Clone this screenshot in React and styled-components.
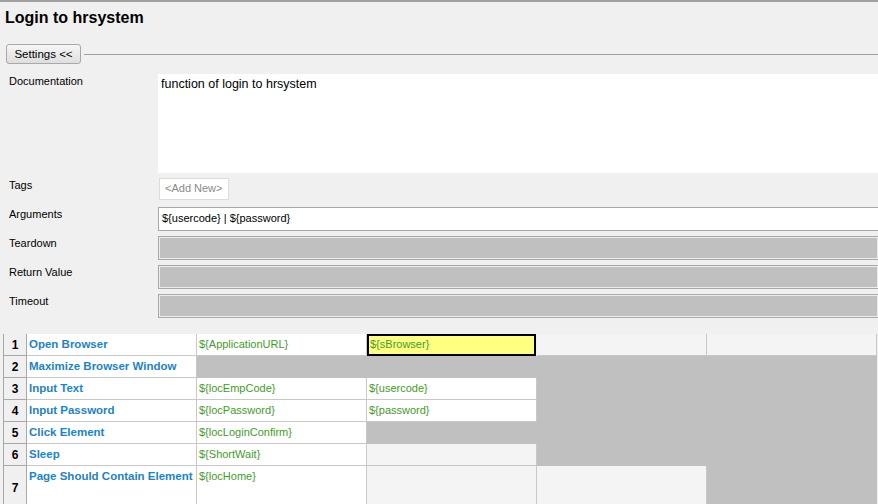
import styled, { createGlobalStyle } from 'styled-components';

const GlobalStyle = createGlobalStyle`
	html, body {
		margin: 0;
		padding: 0;
		background: #f0f0f0;
		overflow: hidden;
	}
	body {
		font-family: 'Liberation Sans', Arial, sans-serif;
		font-size: 11px;
		color: #000;
	}
`;

const fields = [
	{ label: 'Tags', kind: 'tags' },
	{ label: 'Arguments', kind: 'text', value: '${usercode} | ${password}' },
	{ label: 'Teardown', kind: 'disabled' },
	{ label: 'Return Value', kind: 'disabled' },
	{ label: 'Timeout', kind: 'disabled' }
];

// cell kinds: v = value (white), e = empty (light), d = disabled (grey), s = selected
const steps = [
	{ keyword: 'Open Browser', cells: [['v', '${ApplicationURL}'], ['s', '${sBrowser}'], ['e'], ['e']] },
	{ keyword: 'Maximize Browser Window', cells: [['d'], ['d'], ['d'], ['d']] },
	{ keyword: 'Input Text', cells: [['v', '${locEmpCode}'], ['v', '${usercode}'], ['d'], ['d']] },
	{ keyword: 'Input Password', cells: [['v', '${locPassword}'], ['v', '${password}'], ['d'], ['d']] },
	{ keyword: 'Click Element', cells: [['v', '${locLoginConfirm}'], ['d'], ['d'], ['d']] },
	{ keyword: 'Sleep', cells: [['v', '${ShortWait}'], ['e'], ['d'], ['d']] },
	{ keyword: 'Page Should Contain Element', cells: [['v', '${locHome}'], ['e'], ['e'], ['d']], tall: true }
];

export default function App() {
	return (
		<>
			<GlobalStyle />
			<Frame>
				<Title>Login to hrsystem</Title>
				<SettingsBar>
					<SettingsButton>Settings &lt;&lt;</SettingsButton>
					<Rule />
				</SettingsBar>
				<Form>
					<Label>Documentation</Label>
					<DocArea>function of login to hrsystem</DocArea>
					{fields.map(f => (
						<FieldRow key={f.label} $kind={f.kind}>
							<Label>{f.label}</Label>
							{f.kind === 'tags' && <AddNew>&lt;Add New&gt;</AddNew>}
							{f.kind === 'text' && <TextField>{f.value}</TextField>}
							{f.kind === 'disabled' && <DisabledField />}
						</FieldRow>
					))}
				</Form>
				<Table>
					{steps.map((step, i) => (
						<Row key={i} $tall={step.tall}>
							<RowHead>{i + 1}</RowHead>
							<Cell $kind='v'>
								<Keyword>{step.keyword}</Keyword>
							</Cell>
							{step.cells.map(([kind, text], j) => (
								<Cell key={j} $kind={kind}>
									{text && <Arg>{text}</Arg>}
								</Cell>
							))}
						</Row>
					))}
				</Table>
			</Frame>
		</>
	);
}

const Frame = styled.div`
	border-top: 2px solid #a0a0a0;
	height: 502px;
	overflow: hidden;
`;

const Title = styled.h1`
	margin: 0;
	padding: 6px 5px 0;
	font-size: 16px;
	line-height: 19px;
	font-weight: bold;
	box-sizing: border-box;
	height: 25px;
`;

const SettingsBar = styled.div`
	display: flex;
	align-items: center;
	margin-top: 17px;
	padding-left: 6px;
	height: 20px;
`;

const SettingsButton = styled.button`
	font: inherit;
	font-size: 11.5px;
	height: 20px;
	width: 75px;
	padding: 0;
	border: 1px solid #a9a9a9;
	border-radius: 3px;
	background: linear-gradient(#f6f6f6, #dedede);
	color: #000;
`;

const Rule = styled.div`
	flex: 1;
	height: 1px;
	margin-left: 3px;
	background: #a0a0a0;
`;

const Form = styled.div`
	display: grid;
	grid-template-columns: 158px 1fr;
	margin-top: 10px;
`;

const Label = styled.div`
	padding: 1px 0 0 9px;
	line-height: 13px;
`;

const DocArea = styled.div`
	height: 99px;
	background: #fff;
	padding: 3px 3px;
	box-sizing: border-box;
	font-size: 12.5px;
	line-height: 14px;
`;

const FieldRow = styled.div`
	display: contents;
	& > * {
		margin-top: ${p => (p.$kind === 'text' ? '7px' : '5px')};
	}
`;

const AddNew = styled.div`
	justify-self: start;
	margin-left: 1px;
	width: 70px;
	height: 22px;
	box-sizing: border-box;
	border: 1px solid #dcdcdc;
	background: #fff;
	color: #8a8a8a;
	line-height: 19px;
	padding-left: 5px;
`;

const TextField = styled.div`
	height: 24px;
	box-sizing: border-box;
	border: 1px solid #a8a8a8;
	border-right: none;
	background: #fff;
	padding: 3px 0 0 3px;
	line-height: 14px;
`;

const DisabledField = styled.div`
	height: 24px;
	box-sizing: border-box;
	border: 1px solid #a8a8a8;
	border-right: none;
	background: #c0c0c0;
	box-shadow: inset 0 0 0 1px #ececec;
`;

const Table = styled.div`
	margin: 15px 0 0 3px;
	border-top: 1px solid #f0f0f0;
`;

const Row = styled.div`
	display: grid;
	grid-template-columns: 24px repeat(5, 170px);
	height: ${p => (p.$tall ? '44px' : '22px')};
`;

const RowHead = styled.div`
	display: flex;
	align-items: center;
	justify-content: center;
	background: #f0f0f0;
	border-left: 1px solid #a8a8a8;
	border-right: 1px solid #a8a8a8;
	border-bottom: 1px solid #a8a8a8;
	font-weight: bold;
	font-size: 12px;
	padding-top: 1px;
	box-sizing: border-box;
`;

const cellBg = { v: '#ffffff', e: '#f4f4f4', d: '#c0c0c0', s: '#ffff80' };

const Cell = styled.div`
	box-sizing: border-box;
	background: ${p => cellBg[p.$kind]};
	border-right: 1px solid ${p => (p.$kind === 'd' ? '#c0c0c0' : '#c8c8c8')};
	border-bottom: 1px solid ${p => (p.$kind === 'd' ? '#c0c0c0' : '#c8c8c8')};
	padding: 3px 0 0 2px;
	line-height: 14px;
	white-space: nowrap;
	overflow: hidden;
	${p =>
		p.$kind === 's' &&
		`
		border: 2px solid #000;
		padding: 1px 0 0 1px;
		margin-right: 1px;
	`}
`;

const Keyword = styled.span`
	color: #1f82c4;
	font-weight: bold;
	font-size: 11.5px;
`;

const Arg = styled.span`
	color: #459a2c;
`;
